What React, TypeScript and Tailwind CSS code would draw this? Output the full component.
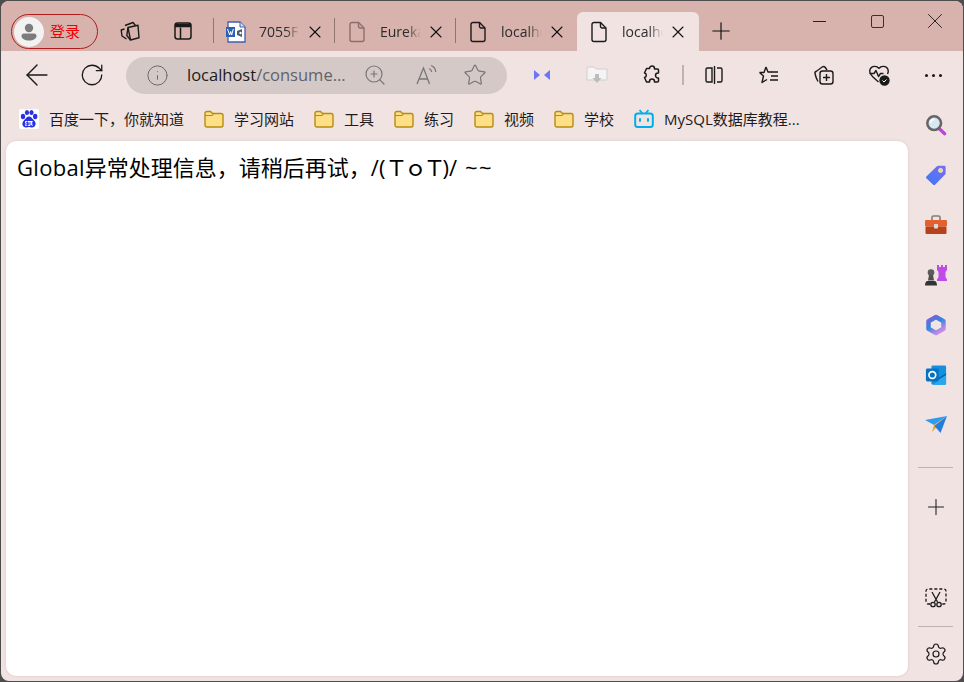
import { ArrowLeft, Info, Plus, RotateCw, Settings, Star, X, ZoomIn } from "lucide-react";
import type { ReactNode } from "react";

const uiFont = "font-['Open_Sans','Noto_Sans_CJK_SC',sans-serif]";

function PageIcon({ faded = false }: { faded?: boolean }) {
  return (
    <svg width="20" height="22" viewBox="0 0 20 22" fill="none" stroke={faded ? "#8c6f6c" : "#1a1a1a"} strokeWidth="1.4">
      <path d="M3 3.500a2 2 0 0 1 2-2h6.500l5.500 5.500v11.500a2 2 0 0 1-2 2h-10a2 2 0 0 1-2-2z" />
      <path d="M11.500 1.500v4a1.500 1.500 0 0 0 1.500 1.500h4" />
    </svg>
  );
}

function WordIcon() {
  return (
    <svg width="22" height="22" viewBox="0 0 22 22">
      <path d="M3 1h12l5 5v15H3z" fill="#fff" stroke="#3f5fae" strokeWidth="1.3" />
      <path d="M15 1v5h5" fill="#d6def0" stroke="#3f5fae" strokeWidth="1" />
      <rect x="1" y="6" width="9" height="10" fill="#2f5fb0" />
      <path d="M2.500 8l2.200 6 1-3.500 1 3.500 1.600-6" stroke="#fff" strokeWidth="1" fill="none" />
      <path d="M12 10l5-2v8l-5-2z" fill="#4c5b70" />
      <circle cx="15.500" cy="12" r="1.200" fill="#fff" />
    </svg>
  );
}

function Tab({ icon, title, active = false }: { icon: ReactNode; title: string; active?: boolean }) {
  return (
    <div
      className={`flex h-[39px] shrink-0 items-center self-end pl-[11px] ${
        active ? "ml-px w-[122px] rounded-t-[6px] bg-[#f1e3e2]" : "w-[120px]"
      }`}
    >
      <span className="flex w-[22px] justify-center">{icon}</span>
      <span className="ml-[12px] w-[41px] overflow-hidden whitespace-nowrap text-[14px] text-[#2b2b2b] [mask-image:linear-gradient(90deg,#000_65%,transparent)]">
        {title}
      </span>
      <X size={20} strokeWidth={1.3} className="ml-[5px] text-[#111]" />
    </div>
  );
}

function TabDivider() {
  return <div className="mb-[8px] h-[25px] w-px shrink-0 self-end bg-[#8f7471]" />;
}

function TabStrip() {
  return (
    <div className="flex h-[50px] items-stretch bg-[#d8b2ac] pl-[10px]">
      <div className="mt-[13px] flex h-[35px] w-[87px] shrink-0 items-center rounded-full border-[1.5px] border-[#b01c1c] pl-[2px]">
        <span className="flex h-[30px] w-[30px] items-center justify-center rounded-full bg-[#f2f2f2]">
          <svg width="22" height="22" viewBox="0 0 22 22" fill="#7c7c7c">
            <circle cx="11" cy="7" r="4.200" />
            <path d="M3.500 15a2.500 2.500 0 0 1 2.500-2.500h10a2.500 2.500 0 0 1 2.500 2.500c0 2.600-3.200 4.500-7.500 4.500S3.500 17.600 3.500 15z" />
          </svg>
        </span>
        <span className="ml-[6px] text-[15px] text-[#f00000]">登录</span>
      </div>
      <div className="flex w-[58px] shrink-0 items-center justify-center pl-[6px] pt-[10px]">
        <svg width="22" height="22" viewBox="0 0 22 22" fill="none" stroke="#1a1a1a" strokeWidth="1.4" strokeLinejoin="round">
          <path d="M9 7.500l10-2.200 1 12.500-8.500 2.200z" />
          <path d="M9 7.500l-1.200 8 3.700 4.500" />
          <path d="M5.500 9l-3.300 1 .8 6 4.500 3" />
          <path d="M6 5.500l8-3 2.500 3" />
        </svg>
      </div>
      <div className="flex w-[54px] shrink-0 items-center justify-center pt-[10px]">
        <svg width="20" height="20" viewBox="0 0 20 20" fill="none" stroke="#1a1a1a" strokeWidth="1.5">
          <rect x="2" y="2" width="16" height="16" rx="2.500" />
          <path d="M2 4.500h16" strokeWidth="3.500" />
          <path d="M7.500 6.500V18" />
        </svg>
      </div>
      <div className="ml-[3px] flex items-stretch">
        <TabDivider />
        <Tab icon={<WordIcon />} title="7055F" />
        <TabDivider />
        <Tab icon={<PageIcon faded />} title="Eureka" />
        <TabDivider />
        <Tab icon={<PageIcon />} title="localhost" />
        <Tab icon={<PageIcon />} title="localhost" active />
      </div>
      <div className="flex w-[44px] shrink-0 items-center justify-center pt-[10px]">
        <Plus size={28} strokeWidth={1} className="text-[#111]" />
      </div>
      <div className="ml-auto flex items-start">
        <div className="flex h-[40px] w-[58px] items-center justify-center">
          <div className="h-px w-[13px] bg-[#222]" />
        </div>
        <div className="flex h-[40px] w-[58px] items-center justify-center">
          <div className="h-[13px] w-[13px] rounded-[2px] border border-[#333]" />
        </div>
        <div className="flex h-[40px] w-[57px] items-center justify-center">
          <X size={26} strokeWidth={0.8} className="text-[#111]" />
        </div>
      </div>
    </div>
  );
}

function Slot({ children }: { children: ReactNode }) {
  return <div className="flex h-full w-[55px] shrink-0 items-center justify-center">{children}</div>;
}

function Toolbar() {
  return (
    <div className="flex h-[48px] items-center pl-[8px]">
      <Slot>
        <ArrowLeft size={34} strokeWidth={1} className="text-[#1a1a1a]" />
      </Slot>
      <Slot>
        <RotateCw size={26} strokeWidth={1.2} className="text-[#1a1a1a]" />
      </Slot>
      <div className="ml-[7px] flex h-[37px] w-[381px] shrink-0 items-center rounded-full bg-[#d5c9c8] pl-[20px]">
        <Info size={23} strokeWidth={1} className="text-[#666]" />
        <span className="ml-[18px] w-[170px] whitespace-nowrap text-[16.5px] text-[#1c1c1c]">
          localhost<span className="text-[#5f6368]">/consume...</span>
        </span>
        <ZoomIn size={24} strokeWidth={1.2} className="ml-[6px] text-[#777]" />
        <svg width="24" height="22" viewBox="0 0 24 22" fill="none" stroke="#777" strokeWidth="1.3" className="ml-[27px]">
          <path d="M3 20L9.500 4l6 16M5 15h9" />
          <path d="M15 4.500c1.500.5 2.500 1.800 2.700 3.500M17 1.500c2.800 1 4.500 3.400 4.700 6.500" />
        </svg>
        <Star size={24} strokeWidth={1.2} className="ml-[25px] text-[#777]" />
      </div>
      <div className="ml-[7px] flex h-full items-center">
        <Slot>
          <svg width="18" height="12" viewBox="0 0 18 12" fill="#6a76f5">
            <path d="M1 1l6 5-6 5z" />
            <path d="M17 1l-6 5 6 5z" />
          </svg>
        </Slot>
        <Slot>
          <svg width="22" height="20" viewBox="0 0 22 20">
            <path d="M1 2h7l2 2h11v11H1z" fill="#f4f4f4" stroke="#cfcfcf" />
            <path d="M9 9h4v4h2.500L11 18l-4.500-5H9z" fill="#bcbcbc" />
          </svg>
        </Slot>
        <Slot>
          <svg width="20" height="20" viewBox="0 0 20 20" fill="none" stroke="#1a1a1a" strokeWidth="1.5" strokeLinejoin="round">
            <path d="M7.500 3.500a2.500 2.500 0 0 1 5 0v.5h3a1 1 0 0 1 1 1v3h-.5a2.500 2.500 0 0 0 0 5h.5v3a1 1 0 0 1-1 1h-3v-.5a2.500 2.500 0 0 0-5 0v.5h-3l-2-4.500a2.300 2.300 0 0 0 0-4.500l2-4.500h3z" />
          </svg>
        </Slot>
        <div className="ml-[3px] mr-[2px] h-[20px] w-[2px] bg-[#bfb3b2]" />
        <Slot>
          <svg width="20" height="20" viewBox="0 0 20 20" fill="none" stroke="#1a1a1a" strokeWidth="1.4">
            <path d="M8 3H3.500A1.500 1.500 0 0 0 2 4.500v11A1.500 1.500 0 0 0 3.500 17H8z" />
            <path d="M10.500 1v18" />
            <path d="M13 3h3.500A1.500 1.500 0 0 1 18 4.500v11a1.500 1.500 0 0 1-1.500 1.500H13" />
          </svg>
        </Slot>
        <Slot>
          <svg width="22" height="20" viewBox="0 0 22 20" fill="none" stroke="#1a1a1a" strokeWidth="1.4" strokeLinejoin="round">
            <path d="M8 2l2 5h3.500M1.500 7.500H6L8 2M1.500 7.500l4 3.500-1.500 6.500 5-3" />
            <path d="M13 7h7M13 11h7M12 15h8" />
          </svg>
        </Slot>
        <Slot>
          <svg width="22" height="22" viewBox="0 0 22 22" fill="none" stroke="#1a1a1a" strokeWidth="1.4">
            <path d="M5 17.500C3.500 15 2.500 12 2 9.500a2 2 0 0 1 1.500-2.300L9.500 2.800c1-.5 2-.2 2.800.7L14 6" />
            <rect x="7" y="7" width="13" height="13" rx="2.500" />
            <path d="M13.500 10v7M10 13.500h7" />
          </svg>
        </Slot>
        <Slot>
          <svg width="22" height="22" viewBox="0 0 22 22" fill="none" stroke="#1a1a1a" strokeWidth="1.4" strokeLinejoin="round">
            <path d="M11 4.500C9 1.500 3.500 1.500 2 5.500c-1 3 1 5.500 3 7.500l5.500 5" />
            <path d="M11 4.500c2-3 7.500-3 9 1 .5 1.500.3 3-.5 4.500" />
            <path d="M1.500 9.500H6l2-3 2.500 6 2-3h3" />
            <circle cx="16.500" cy="16.500" r="4.500" fill="#1a1a1a" />
            <path d="M14.500 16.500l1.500 1.500 2.500-2.500" stroke="#fff" strokeWidth="1" />
          </svg>
        </Slot>
        <Slot>
          <div className="flex gap-[4px]">
            <span className="h-[3px] w-[3px] rounded-full bg-[#1a1a1a]" />
            <span className="h-[3px] w-[3px] rounded-full bg-[#1a1a1a]" />
            <span className="h-[3px] w-[3px] rounded-full bg-[#1a1a1a]" />
          </div>
        </Slot>
      </div>
    </div>
  );
}

function FolderIcon() {
  return (
    <svg width="20" height="18" viewBox="0 0 20 18" className="shrink-0">
      <path
        d="M1 3.500A2 2 0 0 1 3 1.500h3.500l2 2H17a2 2 0 0 1 2 2V15a2 2 0 0 1-2 2H3a2 2 0 0 1-2-2z"
        fill="#fddf85"
        stroke="#b98a10"
        strokeWidth="1.4"
      />
      <path d="M1 5.500h7.500l1-2" fill="none" stroke="#b98a10" strokeWidth="1" />
    </svg>
  );
}

function Bookmark({ icon, label }: { icon: ReactNode; label: string }) {
  return (
    <div className="flex shrink-0 items-center gap-[10px]">
      {icon}
      <span className="whitespace-nowrap text-[15px] text-[#1c1c1c]">{label}</span>
    </div>
  );
}

function BaiduIcon() {
  return (
    <svg width="20" height="20" viewBox="0 0 20 20" className="shrink-0">
      <rect width="20" height="20" rx="2" fill="#fff" />
      <g fill="#2932e1">
        <ellipse cx="4" cy="7.500" rx="2.200" ry="2.700" />
        <ellipse cx="8" cy="3.500" rx="2.100" ry="2.600" />
        <ellipse cx="12.500" cy="3.500" rx="2.100" ry="2.600" />
        <ellipse cx="16.200" cy="7.500" rx="2.200" ry="2.700" />
        <path d="M10 7.500c2 0 3 1.800 4.500 3.300 1.500 1.500 2.500 3 2 5-.5 2.200-2.500 3-4 2.700-1-.2-1.700-.5-2.500-.5s-1.500.3-2.500.5c-1.500.3-3.500-.5-4-2.700-.5-2 .5-3.500 2-5C7 9.300 8 7.500 10 7.500z" />
      </g>
      <rect x="6" y="12" width="8" height="5" rx="1" fill="#fff" />
      <path d="M8.500 12.500v4M6.800 14.800a1.500 1.500 0 1 0 3 0a1.500 1.500 0 1 0-3 0M11 13v2.500a1.200 1.200 0 0 0 2.400 0V13" fill="none" stroke="#2932e1" strokeWidth=".9" />
    </svg>
  );
}

function BiliIcon() {
  return (
    <svg width="20" height="20" viewBox="0 0 20 20" fill="none" stroke="#00aeec" strokeWidth="2" className="shrink-0">
      <rect x="1.200" y="4.500" width="17.600" height="13.500" rx="2.500" />
      <path d="M5.500 1l3 3.500M14.500 1l-3 3.500" strokeWidth="1.8" />
      <path d="M6 10v2M14 10v2" strokeLinecap="round" />
    </svg>
  );
}

function BookmarksBar() {
  return (
    <div className="flex h-[40px] shrink-0 items-center gap-[20px] pl-[18px]">
      <Bookmark icon={<BaiduIcon />} label="百度一下，你就知道" />
      <Bookmark icon={<FolderIcon />} label="学习网站" />
      <Bookmark icon={<FolderIcon />} label="工具" />
      <Bookmark icon={<FolderIcon />} label="练习" />
      <Bookmark icon={<FolderIcon />} label="视频" />
      <Bookmark icon={<FolderIcon />} label="学校" />
      <Bookmark icon={<BiliIcon />} label="MySQL数据库教程..." />
    </div>
  );
}

function SideSearch() {
  return (
    <svg width="22" height="22" viewBox="0 0 24 24">
      <path d="M15 15.500l6.500 6" stroke="#c040e0" strokeWidth="3.500" strokeLinecap="round" />
      <circle cx="10" cy="10" r="7.500" fill="#d8e8f2" stroke="#666" strokeWidth="2.800" />
      <path d="M6 9.500a4 4 0 0 1 4-3.500" stroke="#fff" strokeWidth="1.500" fill="none" />
    </svg>
  );
}

function SideTag() {
  return (
    <svg width="22" height="22" viewBox="0 0 24 24">
      <defs>
        <linearGradient id="tagFill" x1="0" y1="1" x2="1" y2="0">
          <stop offset="0" stopColor="#3a7bf5" />
          <stop offset="1" stopColor="#7c6cf0" />
        </linearGradient>
      </defs>
      <path d="M1.500 13.500L13 2.500a2 2 0 0 1 1.500-.5H21a1.500 1.500 0 0 1 1.500 1.500V10a2 2 0 0 1-.6 1.400L11 22.500a1.500 1.500 0 0 1-2.100 0L1.500 15.600a1.500 1.500 0 0 1 0-2.100z" fill="url(#tagFill)" />
      <circle cx="17" cy="7" r="2.200" fill="#ffd23f" stroke="#fff" strokeWidth=".8" />
    </svg>
  );
}

function SideToolbox() {
  return (
    <svg width="24" height="22" viewBox="0 0 24 22">
      <path d="M8 6V3.500A1.500 1.500 0 0 1 9.500 2h5A1.500 1.500 0 0 1 16 3.500V6" fill="none" stroke="#7d7d7d" strokeWidth="1.6" />
      <rect x="1" y="6" width="22" height="6.500" rx="1" fill="#e4602d" />
      <rect x="1.500" y="12.500" width="21" height="7.500" rx="1" fill="#b9411a" />
      <rect x="10" y="10" width="4" height="4.500" rx=".8" fill="#d9d9d9" />
    </svg>
  );
}

function SideGames() {
  return (
    <svg width="24" height="24" viewBox="0 0 24 24">
      <path d="M13 2h2v2h2V2h2v2h2V2h2v5l-1.500 2v5l1.500 2.500V18H13v-1.500l1.500-2.500V9L13 7z" fill="#c04be8" />
      <circle cx="7" cy="9.500" r="3.300" fill="#5b5b5b" />
      <path d="M5 12h4l1 5.500H4z" fill="#4f4f4f" />
      <path d="M1 22.500c0-2.500 1-4.500 2.500-4.500h7c1.500 0 2.500 2 2.500 4.500z" fill="#333" />
    </svg>
  );
}

function SideM365() {
  return (
    <svg width="22" height="24" viewBox="0 0 22 24" fill="none">
      <defs>
        <linearGradient id="ringA" x1="0" y1="0" x2="0.6" y2="1">
          <stop offset="0" stopColor="#8a5ad8" />
          <stop offset="0.5" stopColor="#2f86e0" />
          <stop offset="1" stopColor="#c48ae8" />
        </linearGradient>
      </defs>
      <path d="M11 4l7.500 4.300v7.400L11 20l-7.500-4.300V8.300z" stroke="url(#ringA)" strokeWidth="4.500" strokeLinejoin="round" fill="#f1e3e2" />
    </svg>
  );
}

function SideOutlook() {
  return (
    <svg width="22" height="22" viewBox="0 0 24 24">
      <rect x="7" y="1.500" width="16" height="21" rx="1.500" fill="#1490df" />
      <path d="M23 10v11.500a1 1 0 0 1-1 1H9z" fill="#28a8ea" />
      <path d="M7 10l8 5 8-5v2l-8 5-8-5z" fill="#0a5ea8" />
      <rect x="1" y="5" width="14" height="14" rx="1.500" fill="#0672c4" />
      <circle cx="8" cy="12" r="3.700" fill="none" stroke="#fff" strokeWidth="1.800" />
    </svg>
  );
}

function SideSend() {
  return (
    <svg width="24" height="20" viewBox="0 0 24 20">
      <path d="M1 5l22-4L10 10z" fill="#2b9df0" />
      <path d="M23 1L10 10l-2 7z" fill="#f0a030" />
      <path d="M23 1L10.500 11l6 7z" fill="#1f7fe0" />
    </svg>
  );
}

function Sidebar() {
  return (
    <aside className="flex w-[55px] shrink-0 flex-col items-center pt-px">
      {[<SideSearch />, <SideTag />, <SideToolbox />, <SideGames />, <SideM365 />, <SideOutlook />, <SideSend />].map((icon, i) => (
        <div key={i} className="flex h-[50px] w-full shrink-0 items-center justify-center">
          {icon}
        </div>
      ))}
      <div className="mt-[17px] h-px w-[35px] bg-[#bfb3b2]" />
      <div className="flex h-[78px] items-center">
        <Plus size={26} strokeWidth={1} className="text-[#222]" />
      </div>
      <div className="mt-auto flex h-[56px] items-center">
        <svg width="22" height="20" viewBox="0 0 22 20" fill="none" stroke="#1a1a1a" strokeWidth="1.3">
          <path d="M5 16H3a2 2 0 0 1-2-2V3a2 2 0 0 1 2-2h16a2 2 0 0 1 2 2v11a2 2 0 0 1-2 2h-2" strokeDasharray="3 2" />
          <path d="M7 4l5.500 10M15 4L9.500 14" />
          <circle cx="8" cy="16.500" r="2.200" />
          <circle cx="14" cy="16.500" r="2.200" />
        </svg>
      </div>
      <div className="h-px w-[35px] bg-[#bfb3b2]" />
      <div className="flex h-[54px] items-center">
        <Settings size={24} strokeWidth={1.2} className="text-[#1a1a1a]" />
      </div>
    </aside>
  );
}

export default function App() {
  return (
    <div className={`h-[682px] w-[964px] overflow-hidden bg-[#4d4d4d] p-px ${uiFont}`}>
      <div className="flex h-full flex-col overflow-hidden rounded-[8px] bg-[#f1e3e2]">
        <TabStrip />
        <Toolbar />
        <div className="flex min-h-0 flex-1">
          <div className="flex min-w-0 flex-1 flex-col">
            <BookmarksBar />
            <main className="mb-[5px] ml-[5px] mt-[2px] min-h-0 flex-1 rounded-[10px] bg-white px-[11px] pt-[11px] shadow-[0_0_3px_rgba(0,0,0,0.12)]">
              <p className="text-[22px] leading-[30px] text-black">
                <span className="tracking-[0.3px]">Global</span>异常处理信息，请稍后再试，/(<span className="tracking-[-3px]">ＴｏＴ</span>)/<span className="ml-[8px] tracking-[1.4px]">~~</span>
              </p>
            </main>
          </div>
          <Sidebar />
        </div>
      </div>
    </div>
  );
}
